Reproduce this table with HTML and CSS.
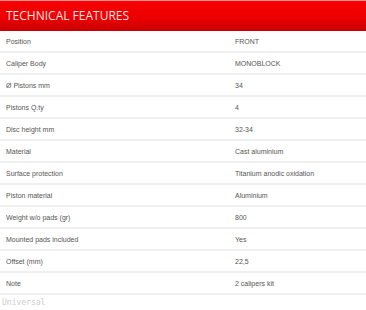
FILE: index.html
```html
<!DOCTYPE html>
<html>
<head>
<meta charset="utf-8">
<link rel="stylesheet" href="styles.css">
</head>
<body>
<div class="panel">
  <div class="header"><h2 class="title">TECHNICAL FEATURES</h2></div>
  <div class="rows">
    <div class="row"><span class="label">Position</span><span class="value">FRONT</span></div>
    <div class="row"><span class="label">Caliper Body</span><span class="value">MONOBLOCK</span></div>
    <div class="row"><span class="label">Ø Pistons mm</span><span class="value">34</span></div>
    <div class="row"><span class="label">Pistons Q.ty</span><span class="value">4</span></div>
    <div class="row"><span class="label">Disc height mm</span><span class="value">32-34</span></div>
    <div class="row"><span class="label">Material</span><span class="value">Cast aluminium</span></div>
    <div class="row"><span class="label">Surface protection</span><span class="value">Titanium anodic oxidation</span></div>
    <div class="row"><span class="label">Piston material</span><span class="value">Aluminium</span></div>
    <div class="row"><span class="label">Weight w/o pads (gr)</span><span class="value">800</span></div>
    <div class="row"><span class="label">Mounted pads included</span><span class="value">Yes</span></div>
    <div class="row"><span class="label">Offset (mm)</span><span class="value">22,5</span></div>
    <div class="row"><span class="label">Note</span><span class="value">2 calipers kit</span></div>
  </div>
  <div class="footer">Universal</div>
</div>
</body>
</html>
```
FILE: styles.css
```css
html, body { margin: 0; padding: 0; background: #fff; }
body { width: 366px; height: 310px; overflow: hidden; }
.panel { display: flex; flex-direction: column; }
.header {
  height: 31px;
  background: linear-gradient(to bottom, #f80000 0%, #ee0000 55%, #c80000 100%);
  border-top: 1px solid #ff9090;
  box-sizing: border-box;
  display: flex;
  align-items: center;
  padding-left: 6px;
}
.title {
  margin: 0;
  font-family: "Open Sans", sans-serif;
  font-weight: 400;
  font-size: 12px;
  color: #ffe0e0;
  letter-spacing: 0;
  line-height: 1;
}
.rows { display: flex; flex-direction: column; }
.row {
  height: 22px;
  box-sizing: border-box;
  border-bottom: 2px solid #f0f0f0;
  padding-top: 1px;
  display: grid;
  grid-template-columns: 229px 1fr;
  align-items: center;
  padding-left: 6px;
  font-family: "Liberation Sans", Arial, sans-serif;
  font-size: 7px;
  color: #555;
}
.footer {
  font-family: "DejaVu Sans Mono", monospace;
  font-size: 8px;
  color: #ccc;
  padding-left: 2px;
  padding-top: 3px;
}
```
